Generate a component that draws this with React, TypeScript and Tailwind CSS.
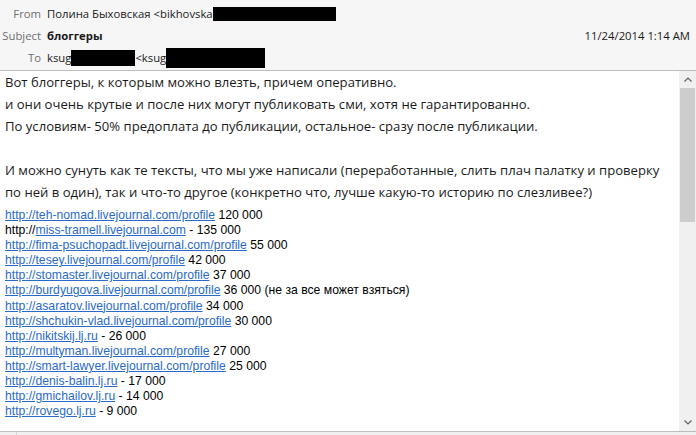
import type { ReactNode } from 'react'

const LINKS: { pre?: string; url: string; rest: string }[] = [
  { url: 'http://teh-nomad.livejournal.com/profile', rest: ' 120 000' },
  { pre: 'http://', url: 'miss-tramell.livejournal.com', rest: ' - 135 000' },
  { url: 'http://fima-psuchopadt.livejournal.com/profile', rest: ' 55 000' },
  { url: 'http://tesey.livejournal.com/profile', rest: ' 42 000' },
  { url: 'http://stomaster.livejournal.com/profile', rest: ' 37 000' },
  { url: 'http://burdyugova.livejournal.com/profile', rest: ' 36 000 (не за все может взяться)' },
  { url: 'http://asaratov.livejournal.com/profile', rest: ' 34 000' },
  { url: 'http://shchukin-vlad.livejournal.com/profile', rest: ' 30 000' },
  { url: 'http://nikitskij.lj.ru', rest: ' - 26 000' },
  { url: 'http://multyman.livejournal.com/profile', rest: ' 27 000' },
  { url: 'http://smart-lawyer.livejournal.com/profile', rest: ' 25 000' },
  { url: 'http://denis-balin.lj.ru', rest: ' - 17 000' },
  { url: 'http://gmichailov.lj.ru', rest: ' - 14 000' },
  { url: 'http://rovego.lj.ru', rest: ' - 9 000' },
]

const BODY = [
  'Вот блоггеры, к которым можно влезть, причем оперативно.',
  'и они очень крутые и после них могут публиковать сми, хотя не гарантированно.',
  'По условиям- 50% предоплата до публикации, остальное- сразу после публикации.',
  '',
  'И можно сунуть как те тексты, что мы уже написали (переработанные, слить плач палатку и проверку',
  'по ней в один), так и что-то другое (конкретно что, лучше какую-то историю по слезливее?)',
]

function HeaderRow({ label, children }: { label: string; children: ReactNode }) {
  return (
    <div className="flex items-center h-[22px]">
      <span className="w-[41px] text-right text-[#6e6e6e]">{label}</span>
      <div className="ml-[6px] flex items-center text-[#1a1a1a]">{children}</div>
    </div>
  )
}

function Redact({ w, h }: { w: string; h: string }) {
  return <span className={`inline-block bg-black ${w} ${h}`} />
}

export default function App() {
  return (
    <div className="w-[696px] h-[435px] flex flex-col bg-[#f6f6f6] overflow-hidden font-['Open_Sans','Noto_Sans',sans-serif]">
      <div className="h-[71px] flex justify-between pt-[3px] text-[11.3px] border-b border-[#bdbdbd]">
        <div>
          <HeaderRow label="From">
            Полина Быховская &lt;bikhovska
            <Redact w="w-[123px]" h="h-[14px]" />
          </HeaderRow>
          <HeaderRow label="Subject">
            <span className="font-bold">блоггеры</span>
          </HeaderRow>
          <HeaderRow label="To">
            ksug
            <Redact w="w-[64px]" h="h-[16px]" />
            &lt;ksug
            <Redact w="w-[99px]" h="h-[20px]" />
          </HeaderRow>
        </div>
        <div className="pt-[25px] pr-[6px] text-[#1a1a1a]">11/24/2014 1:14 AM</div>
      </div>

      <div className="flex-1 flex bg-white min-h-0">
        <div className="flex-1 pl-[5px]">
          <div className="text-[13.1px] leading-[22px] text-[#1a1a1a]">
            {BODY.map((l, i) => (
              <div key={i} className="h-[22px] whitespace-nowrap">{l}</div>
            ))}
          </div>
          <div className="mt-[5px] font-['Liberation_Sans',Arial,sans-serif] text-[12.2px] leading-[15.1px] text-black">
            {LINKS.map((l, i) => (
              <div key={i} className="whitespace-pre">
                {l.pre}
                <span className="text-[#2a6ac8] underline">{l.url}</span>
                {l.rest}
              </div>
            ))}
          </div>
        </div>

        <div className="w-[17px] flex flex-col bg-[#f0f0f0]">
          <div className="h-[17px] flex items-center justify-center">
            <svg width="8" height="5" viewBox="0 0 8 5"><path d="M0.5 4.5 L4 1 L7.5 4.5" fill="none" stroke="#606060" strokeWidth="1.2" /></svg>
          </div>
          <div className="mx-[1px] h-[134px] bg-[#cdcdcd]" />
          <div className="flex-1" />
          <div className="h-[17px] flex items-center justify-center">
            <svg width="8" height="5" viewBox="0 0 8 5"><path d="M0.5 0.5 L4 4 L7.5 0.5" fill="none" stroke="#606060" strokeWidth="1.2" /></svg>
          </div>
        </div>
      </div>

      <div className="h-[4px] flex border-t border-[#bdbdbd] bg-[#f0f0f0]">
        <div className="w-[17px] border-r border-[#d6d6d6]" />
      </div>
    </div>
  )
}
